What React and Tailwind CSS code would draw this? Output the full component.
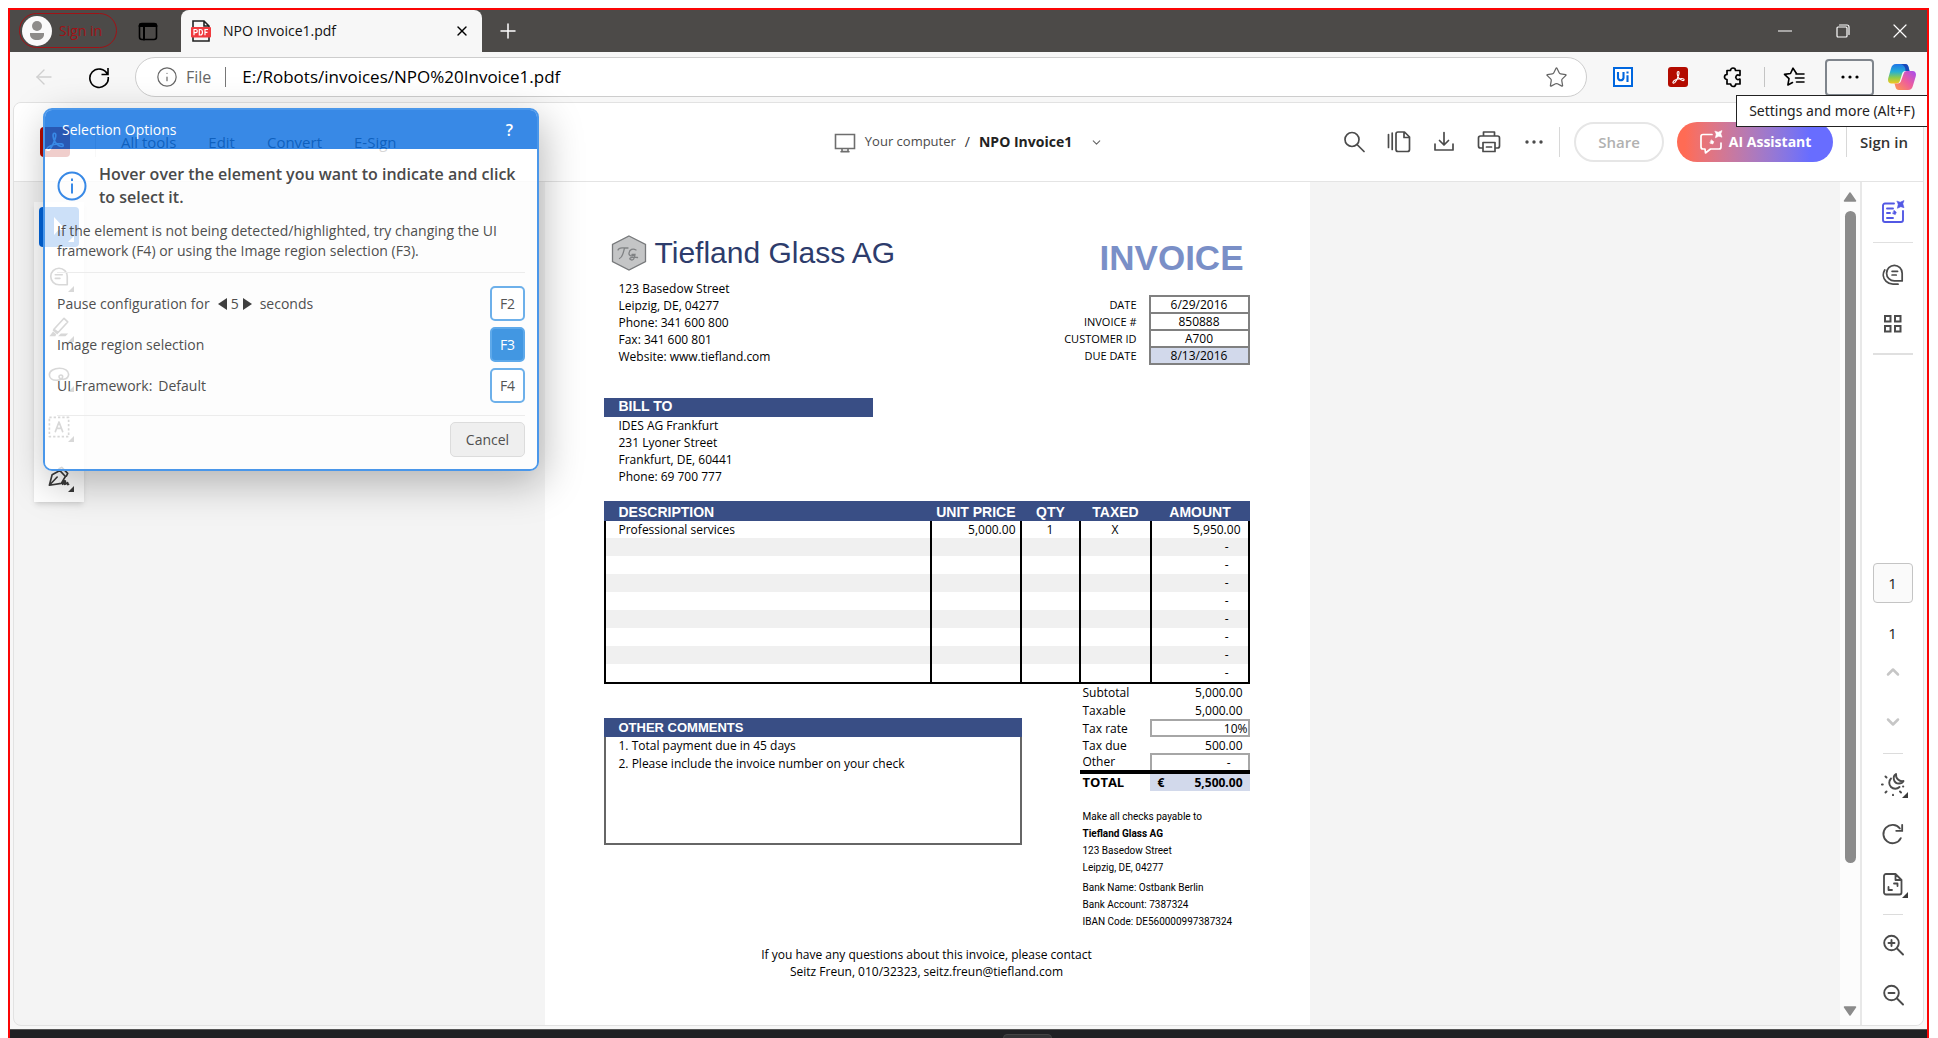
import React from "react";
import {
  ArrowLeft,
  X,
  Plus,
  Info,
  Star,
  ChevronDown,
  ChevronUp,
} from "lucide-react";

const UI_FONT = "font-['Open_Sans','Noto_Sans',sans-serif]";

function Svg({ size = 24, box = 24, sw = 1.6, className = "", children }) {
  return (
    <svg
      width={size}
      height={size}
      viewBox={`0 0 ${box} ${box}`}
      fill="none"
      stroke="currentColor"
      strokeWidth={sw}
      strokeLinecap="round"
      strokeLinejoin="round"
      className={"shrink-0 " + className}
      aria-hidden="true"
    >
      {children}
    </svg>
  );
}

function IconButton({ label, className = "", children }) {
  return (
    <button type="button" aria-label={label} className={"flex shrink-0 items-center justify-center " + className}>
      {children}
    </button>
  );
}

const AcrobatGlyph = ({ size }) => (
  <Svg size={size} sw={1.8}>
    <path d="M11.300 2.500c1.800-.3 1.900 2.500 1 5.500-1.200 4-3.800 9.500-6 12-1.400 1.600-3.800 1.200-3.200-.6.900-2.400 6.700-4.900 11.400-5.400 3.500-.4 6.500.1 6.500 1.700s-2.700 1.600-5 .1c-3.200-2-5.800-6.700-6.100-10.300-.1-1.700.3-2.800 1.400-3z" />
  </Svg>
);

/* ---------- Browser chrome ---------- */

function TabStrip() {
  return (
    <div className="flex h-[42px] shrink-0 items-stretch bg-[#4c4a48]">
      <button
        type="button"
        className="mt-[3px] ml-[9px] flex h-[35px] w-[98px] items-center rounded-full border border-[#a01216] text-sm text-[#a01216]"
      >
        <svg width="32" height="32" viewBox="0 0 32 32" className="ml-px shrink-0" aria-hidden="true">
          <circle cx="16" cy="16" r="15" fill="#fafafa" />
          <circle cx="16" cy="11" r="5" fill="#8e8c8a" />
          <path d="M9 18h14v1.500c0 3.500-3 5.500-7 5.500s-7-2-7-5.500z" fill="#8e8c8a" />
        </svg>
        <span className="ml-1.5">Sign in</span>
      </button>
      <IconButton label="Tab actions" className="ml-[20px] w-[22px] text-black">
        <Svg size={20} box={20} sw={1.6}>
          <rect x="1.500" y="2.500" width="17" height="16" rx="2.500" />
          <path d="M1.500 5h17M2 3.500h16M6 5.500v13" strokeWidth="2" />
        </Svg>
      </IconButton>
      <div className="ml-[22px] flex w-[301px] items-center rounded-t-lg bg-[#f7f7f7] pr-3 pl-[10px]">
        <svg width="20" height="22" viewBox="0 0 20 22" className="shrink-0" aria-hidden="true">
          <path d="M2 8V1h11l5 5v2M2 17v4h16v-4M13 1v5h5" fill="none" stroke="#222" strokeWidth="1.600" />
          <rect x="0" y="7" width="20" height="10.500" rx="1" fill="#f03a3e" />
          <path
            d="M3 15.300V9.500h1.700a1.500 1.500 0 0 1 0 3.200H3M8.300 9.500v5.500h1c2.900 0 2.900-5.500 0-5.500zM14 15.300V9.500h3M14 12.300h2.500"
            fill="none"
            stroke="#fff"
            strokeWidth="1.200"
          />
        </svg>
        <span className="ml-3 flex-1 text-sm text-[#111]">NPO Invoice1.pdf</span>
        <IconButton label="Close tab" className="size-4 text-black">
          <X size={16} strokeWidth={2} />
        </IconButton>
      </div>
      <IconButton label="New tab" className="ml-3 w-7 text-white">
        <Plus size={24} strokeWidth={1.5} />
      </IconButton>
      <div className="flex-1" />
      <IconButton label="Minimize" className="w-[58px] text-white">
        <Svg size={14} box={14} sw={1.2}>
          <path d="M.5 7h13" />
        </Svg>
      </IconButton>
      <IconButton label="Restore" className="w-[58px] text-white">
        <Svg size={14} box={14} sw={1.2}>
          <rect x="1" y="3" width="10" height="10" rx="1" />
          <path d="M3.500 1H11a2 2 0 0 1 2 2v7.500" />
        </Svg>
      </IconButton>
      <IconButton label="Close window" className="w-[55px] text-white">
        <Svg size={14} box={14} sw={1.2}>
          <path d="M1 1l12 12M13 1L1 13" />
        </Svg>
      </IconButton>
    </div>
  );
}

const PUZZLE =
  "M8.500 5.500a2.500 2.500 0 0 1 5 0H18V10a.5.5 0 0 1-.8.4 2.200 2.200 0 1 0 0 3.700.5.500 0 0 1 .8.400V19h-4.300a2.500 2.500 0 0 1-5 0H5v-4.500a2.500 2.500 0 0 1 0-5v-4z";

function AddressRow() {
  return (
    <div className="flex h-[50px] shrink-0 items-center bg-[#f7f7f7]">
      <IconButton label="Back" className="ml-[22px] text-[#cfcfcf]">
        <ArrowLeft size={24} strokeWidth={1.4} />
      </IconButton>
      <IconButton label="Refresh" className="ml-[31px] text-black">
        <Svg size={24} sw={1.6}>
          <path d="M20.500 9.500A9.200 9.200 0 1 0 21.200 12M21 3v6.500h-6.500" strokeLinecap="butt" strokeLinejoin="miter" />
        </Svg>
      </IconButton>
      <div className="ml-[24px] flex h-10 flex-1 items-center rounded-full border border-[#cdcdcd] bg-white pr-[18px] pl-[20px]">
        <Info size={22} strokeWidth={1.3} className="shrink-0 text-[#666]" />
        <span className="ml-2 text-base text-[#666]">File</span>
        <span className="mx-[14px] h-5 w-px bg-[#777]" />
        <input
          type="text"
          aria-label="Address"
          defaultValue="E:/Robots/invoices/NPO%20Invoice1.pdf"
          className="min-w-0 flex-1 bg-transparent pl-0.5 text-[17px] text-black outline-none"
        />
        <IconButton label="Add to favorites" className="text-[#666]">
          <Star size={23} strokeWidth={1.3} />
        </IconButton>
      </div>
      <IconButton label="UiPath" className="ml-[26px]">
        <svg width="20" height="20" viewBox="0 0 20 20" aria-hidden="true">
          <rect x="1" y="1" width="18" height="18" fill="#fff" stroke="#0067df" strokeWidth="2" />
          <path d="M5 5v6a2.800 2.800 0 0 0 5.500 0V5M14.500 8.300V15M14.500 4.500v2" fill="none" stroke="#0067df" strokeWidth="2.100" />
        </svg>
      </IconButton>
      <IconButton label="Adobe Acrobat" className="ml-[35px] size-5 rounded-[3px] bg-[#b30b00] text-white">
        <AcrobatGlyph size={15} />
      </IconButton>
      <IconButton label="Extensions" className="ml-[34px] text-black">
        <Svg size={24} sw={1.7}>
          <path d={PUZZLE} />
        </Svg>
      </IconButton>
      <span className="ml-[18px] h-5 w-px bg-[#c4c4c4]" />
      <IconButton label="Favorites" className="ml-[17px] text-black">
        <Svg size={24} sw={1.6}>
          <path d="M14.500 8.500L11 3.200 8.500 8.500l-6 .9 4.500 4.300-1.100 6.300 4.600-2.500M14 9h8M13.500 13h8.500M14.500 17h7.500" />
        </Svg>
      </IconButton>
      <IconButton
        label="Settings and more"
        className="ml-[19px] h-[37px] w-[49px] rounded border-2 border-[#7f858c] text-black"
      >
        <svg width="18" height="4" viewBox="0 0 18 4" aria-hidden="true">
          <circle cx="2" cy="2" r="1.600" />
          <circle cx="9" cy="2" r="1.600" />
          <circle cx="16" cy="2" r="1.600" />
        </svg>
      </IconButton>
      <IconButton label="Copilot" className="mr-[11px] ml-[14px]">
        <svg width="28" height="26" viewBox="0 0 28 26" aria-hidden="true">
          <defs>
            <linearGradient id="cpA" x1="0" y1="0" x2="0" y2="1">
              <stop offset="0" stopColor="#1f74e8" />
              <stop offset=".4" stopColor="#25b0d4" />
              <stop offset=".7" stopColor="#8ecb4c" />
              <stop offset="1" stopColor="#f4c71f" />
            </linearGradient>
            <linearGradient id="cpB" x1="1" y1="0" x2="0" y2="1">
              <stop offset="0" stopColor="#a44cf0" />
              <stop offset=".5" stopColor="#ee5d9c" />
              <stop offset="1" stopColor="#ff9a4a" />
            </linearGradient>
          </defs>
          <path d="M8 0h9c2 0 3 1 3.500 3l1 4h-4c-2 0-3 1-3.500 3l-2 6.500c-.6 2-1.500 3-3.500 3H3.500C.5 19.500-.5 17 .3 14L3 4.500C3.800 1.500 5.200 0 8 0z" fill="url(#cpA)" />
          <path d="M20 26h-9c-2 0-3-1-3.500-3l-1-3.500h3.200c2 0 3-1 3.500-3L15.500 10c.6-2 1.500-3 3.500-3h5.500c3 0 4 2.500 3.200 5.500L25 21.500c-.8 3-2.200 4.500-5 4.500z" fill="url(#cpB)" />
          <path d="M13 0h4c2 0 3 1 3.500 3l1 4h-4c0-4-1.500-6-4.500-7z" fill="#1a49b8" />
        </svg>
      </IconButton>
    </div>
  );
}

/* ---------- Viewer header ---------- */

function ViewerHeader() {
  return (
    <header className="grid h-[79px] shrink-0 grid-cols-[1fr_auto_1fr] items-center border-b border-[#e4e4e4] bg-white text-[15px] text-[#333]">
      <div className="flex items-center pl-[26px]">
        <span className="flex size-[30px] items-center justify-center rounded bg-[#b30b00] text-white">
          <AcrobatGlyph size={22} />
        </span>
        <span className="mr-[25px] ml-[25px] h-[30px] w-px bg-[#ddd]" />
        <nav className="flex gap-8">
          <button type="button">All tools</button>
          <button type="button">Edit</button>
          <button type="button">Convert</button>
          <button type="button">E-Sign</button>
        </nav>
      </div>
      <div className="flex items-center">
        <Svg size={22} box={22} sw={1.6} className="text-[#6e6e6e]">
          <path d="M1.500 3.500h19v14h-19zM8 17.500v3h6v-3M7 20.800h8" strokeLinejoin="miter" />
        </Svg>
        <span className="ml-[9px] text-[13px] text-[#4b4b4b]">Your computer</span>
        <span className="mx-[9px] text-sm">/</span>
        <button type="button" className="flex items-center text-sm font-bold text-[#222]">
          NPO Invoice1
          <ChevronDown size={13} strokeWidth={2} className="ml-[18px] text-[#666]" />
        </button>
      </div>
      <div className="flex items-center justify-end pr-[15px]">
        <IconButton label="Search" className="h-8 w-[45px] text-[#4b4b4b]">
          <Svg size={22} box={22} sw={1.7}>
            <circle cx="9" cy="8.500" r="7" />
            <path d="M14 13.500l7 7" />
          </Svg>
        </IconButton>
        <IconButton label="Page thumbnails" className="h-8 w-[45px] text-[#4b4b4b]">
          <Svg size={24} sw={1.7}>
            <path d="M1.500 4.500v13M5.200 3v16.500M11 2h6.500l5 5v12.500a2 2 0 0 1-2 2H11a2 2 0 0 1-2-2V4a2 2 0 0 1 2-2zM17 2.300V7.500h5" />
          </Svg>
        </IconButton>
        <IconButton label="Download" className="h-8 w-[45px] text-[#4b4b4b]">
          <Svg size={22} box={22} sw={1.7}>
            <path d="M11 1.500v12M6.500 9.500L11 14l4.500-4.500M2 13v6h18v-6" />
          </Svg>
        </IconButton>
        <IconButton label="Print" className="h-8 w-[45px] text-[#4b4b4b]">
          <Svg size={24} sw={1.7}>
            <path d="M6.500 6V2h11v4M5.500 18H3.500a2 2 0 0 1-2-2V8a2 2 0 0 1 2-2h17a2 2 0 0 1 2 2v8a2 2 0 0 1-2 2h-2M6 12.500h12v9H6zM9.500 17h5" />
          </Svg>
        </IconButton>
        <IconButton label="More" className="h-8 w-[45px] text-[#4b4b4b]">
          <svg width="20" height="4" viewBox="0 0 20 4" fill="currentColor" aria-hidden="true">
            <circle cx="3" cy="2" r="1.700" />
            <circle cx="10" cy="2" r="1.700" />
            <circle cx="17" cy="2" r="1.700" />
          </svg>
        </IconButton>
        <span className="mr-[14px] ml-[3px] h-[30px] w-px bg-[#d8d8d8]" />
        <button type="button" className="h-10 w-[90px] rounded-full border-2 border-[#e6e6e6] font-semibold text-[#b1b1b1]">
          Share
        </button>
        <button
          type="button"
          className="ml-[13px] flex h-10 w-[156px] items-center justify-center gap-1.5 rounded-full bg-linear-to-r from-[#ff6b54] from-5% to-[#686dff] to-85% text-sm font-bold text-white"
        >
          <Svg size={24} sw={1.7}>
            <path d="M13 4.500H4a2 2 0 0 0-2 2V17a2 2 0 0 0 2 2h2l.5 4L11.500 19H20a2 2 0 0 0 2-2v-4" />
            <path d="M16.200 1.200l3 1L23 .6l-1.200 3.200 1.200 3.400-3.200-1-3.400 1.600.8-3.400zM12.500 10l2.300 1.700-1 2.300-2.600-.8z" fill="currentColor" strokeWidth=".6" />
          </Svg>
          AI Assistant
        </button>
        <span className="mx-[13px] h-[30px] w-px bg-[#d8d8d8]" />
        <button type="button" className="font-semibold whitespace-nowrap text-[#333]">
          Sign in
        </button>
      </div>
    </header>
  );
}

/* ---------- Left floating tools ---------- */

const Corner = ({ className }) => (
  <svg width="6" height="6" viewBox="0 0 6 6" className={"absolute right-[5px] bottom-[5px] " + className} aria-hidden="true">
    <path d="M6 0v6H0z" fill="currentColor" />
  </svg>
);

function FloatingTools() {
  const tools = [
    [
      "Comment",
      <path key="a" d="M12 2.500a9 9 0 1 0 0 18h9v-9a9 9 0 0 0-9-9zM8 9.500h7.500M8 13.500h5" />,
    ],
    [
      "Highlight",
      <g key="b">
        <path d="M17.500 2.500l4 4L11 18l-4.500-3.500zM6 15.500l4 3.500" />
        <path d="M5.500 17l-4 5h6.500l1-2zM14 19h8l-3 3h-8z" fill="currentColor" stroke="none" />
      </g>,
    ],
    [
      "Draw",
      <path key="c" d="M17 14.500c3-.5 5.500-2.500 5.500-5.500 0-4-4.500-6.500-10-6.500S1.500 5 1.500 9.500c0 4 3.500 6 7.500 6 5 0 7-1.500 7-4s-4-2-4 0 2.500 3 5 3z" />,
    ],
    [
      "Edit text",
      <g key="d">
        <path d="M1.500 1.500h21v21h-21z" strokeDasharray="2.500 2.200" strokeLinecap="butt" />
        <path d="M8 17l4-10.500L16 17M9.500 13.500h5" />
      </g>,
    ],
    [
      "Sign",
      <path key="e" d="M1.500 21l3-11.500L13 5l6 6.500-4.500 7.500L1.500 21l8.500-9M12 3l3-1.500L21.500 8 20 11M16 20c1-3 2.500-4.500 3-3.500s-2 4-.5 3.500 2.500-2.500 3-1.500-1 2.500 1 1.500" />,
    ],
  ];
  return (
    <div className="absolute top-[20px] left-[20px] flex w-[50px] flex-col items-center gap-[10px] bg-white pt-[5px] pb-[5px] shadow-md">
      <button type="button" aria-label="Select" className="relative flex size-10 items-center justify-center rounded bg-[#0265dc] text-white">
        <svg width="20" height="22" viewBox="0 0 20 22" aria-hidden="true">
          <path d="M5 1v18l4.500-5H17z" fill="currentColor" />
        </svg>
        <Corner className="text-white" />
      </button>
      {tools.map(([label, icon]) => (
        <button key={label} type="button" aria-label={label} className="relative flex h-10 w-10 items-center justify-center text-[#3a3a3a]">
          <Svg size={22} sw={1.8}>{icon}</Svg>
          <Corner className="text-[#3a3a3a]" />
        </button>
      ))}
    </div>
  );
}

/* ---------- Invoice ---------- */

const META = [
  ["DATE", "6/29/2016"],
  ["INVOICE #", "850888"],
  ["CUSTOMER ID", "A700"],
  ["DUE DATE", "8/13/2016"],
];

const BLANK_ROWS = [1, 2, 3, 4, 5, 6, 7, 8];

function Invoice() {
  return (
    <article className="w-[765px] shrink-0 bg-white pt-[53px] pr-[60px] pl-[59px] text-xs font-medium text-black">
      <div className="flex justify-between">
        <div>
          <div className="flex h-9 items-center">
            <svg width="36" height="36" viewBox="0 0 36 36" className="ml-[7px]" aria-hidden="true">
              <path d="M18 1l16.500 8.500v17L18 35 1.500 26.500v-17z" fill="#c4c5c6" stroke="#77797b" strokeWidth="1.300" />
              <g fill="none" stroke="#808284" strokeWidth="1.300" strokeLinecap="round">
                <path d="M7 15c1-3 4-2 6.500-2h3.500M13.500 13c-1 4-1.500 9-5 10.500" />
                <path d="M25 15c-3-2-6.500-.5-7 3-.5 3 3.500 4 5.500 1.500h-2.500M24 19.500c-.3 4-2 6.500-4.500 5s2-3 7-2" />
              </g>
            </svg>
            <h1 className="ml-2 font-['Liberation_Sans',sans-serif] text-[30px] leading-9 font-normal text-[#2d3c6c]">
              Tiefland Glass AG
            </h1>
          </div>
          <address className="mt-[9px] ml-[15px] leading-[17px] not-italic">
            123 Basedow Street
            <br />
            Leipzig, DE, 04277
            <br />
            Phone: 341 600 800
            <br />
            Fax: 341 600 801
            <br />
            Website: www.tiefland.com
          </address>
        </div>
        <div className="flex flex-col items-end">
          <div className="mt-[3px] mr-1.5 font-['Liberation_Sans',sans-serif] text-[35px] leading-10 font-bold text-[#7a8fc7]">
            INVOICE
          </div>
          <table className="mt-[17px] border-collapse leading-[15px]">
            <tbody>
              {META.map(([k, v]) => (
                <tr key={k} className="h-[17px]">
                  <th className="p-0 pr-3 text-right text-[11px] font-medium">{k}</th>
                  <td
                    className={
                      "w-[99px] border-2 border-[#808080] p-0 text-center " + (k === "DUE DATE" ? "bg-[#d2d9eb]" : "")
                    }
                  >
                    {v}
                  </td>
                </tr>
              ))}
            </tbody>
          </table>
        </div>
      </div>

      <section className="mt-[33px]">
        <h2 className="h-[19px] w-[269px] bg-[#394e85] pl-[15px] font-['Liberation_Sans',sans-serif] text-[14px] leading-[17px] font-bold text-white">
          BILL TO
        </h2>
        <p className="ml-[15px] leading-[17px]">
          IDES AG Frankfurt
          <br />
          231 Lyoner Street
          <br />
          Frankfurt, DE, 60441
          <br />
          Phone: 69 700 777
        </p>
      </section>

      <table className="mt-[16px] w-full table-fixed border-separate border-spacing-0 border-b-2 border-black leading-4">
        <colgroup>
          <col />
          <col className="w-[90px]" />
          <col className="w-[59px]" />
          <col className="w-[71px]" />
          <col className="w-[100px]" />
        </colgroup>
        <thead>
          <tr className="h-[20px] bg-[#394e85] font-['Liberation_Sans',sans-serif] text-[14px] text-white">
            <th className="p-0 pt-0.5 pl-[15px] text-left">DESCRIPTION</th>
            <th className="p-0 pt-0.5 pr-1 text-right whitespace-nowrap">UNIT PRICE</th>
            <th className="p-0 pt-0.5 pl-[3px]">QTY</th>
            <th className="p-0 pt-0.5 pl-[3px]">TAXED</th>
            <th className="p-0 pt-0.5 pl-px">AMOUNT</th>
          </tr>
        </thead>
        <tbody>
          <tr className="h-[17px]">
            <td className="border-l-2 p-0 pl-[13px]">Professional services</td>
            <td className="border-l-2 p-0 pr-1 text-right">5,000.00</td>
            <td className="border-l-2 p-0 text-center">1</td>
            <td className="border-l-2 p-0 text-center">X</td>
            <td className="border-x-2 p-0 pr-[7px] text-right">5,950.00</td>
          </tr>
          {BLANK_ROWS.map((n) => (
            <tr key={n} className="h-[18px] odd:bg-white even:bg-[#f0f0f0]">
              <td className="border-l-2 p-0" />
              <td className="border-l-2 p-0" />
              <td className="border-l-2 p-0" />
              <td className="border-l-2 p-0" />
              <td className="border-x-2 p-0 pr-[19px] text-right">-</td>
            </tr>
          ))}
        </tbody>
      </table>

      <div className="flex justify-between">
        <section className="mt-[34px] h-[127px] w-[418px] border-2 border-t-0 border-[#666]">
          <h2 className="-mx-0.5 h-[19px] bg-[#394e85] pl-[15px] font-['Liberation_Sans',sans-serif] text-[13px] leading-[19px] font-bold text-white">
            OTHER COMMENTS
          </h2>
          <ol className="pl-[13px] leading-[18px]">
            <li>1. Total payment due in 45 days</li>
            <li>2. Please include the invoice number on your check</li>
          </ol>
        </section>
        <div className="w-[170px]">
          <table className="w-full table-fixed border-separate border-spacing-0 leading-[13px]">
            <colgroup>
              <col />
              <col className="w-[100px]" />
            </colgroup>
            <tbody>
              <tr className="h-[17px]">
                <th className="p-0 pl-[3px] text-left font-medium">Subtotal</th>
                <td className="p-0 pr-[7px] text-right">5,000.00</td>
              </tr>
              <tr className="h-[18px]">
                <th className="p-0 pl-[3px] text-left font-medium">Taxable</th>
                <td className="p-0 pr-[7px] text-right">5,000.00</td>
              </tr>
              <tr className="h-[18px]">
                <th className="p-0 pl-[3px] text-left font-medium">Tax rate</th>
                <td className="border-2 border-[#a6a6a6] p-0 text-right">10%</td>
              </tr>
              <tr className="h-[16px]">
                <th className="p-0 pl-[3px] text-left font-medium">Tax due</th>
                <td className="p-0 pr-[7px] text-right">500.00</td>
              </tr>
              <tr className="h-[17px]">
                <th className="p-0 pl-[3px] text-left font-medium">Other</th>
                <td className="border-2 border-b-0 border-[#a6a6a6] p-0 pr-[17px] text-right">-</td>
              </tr>
              <tr className="h-[21px] font-bold">
                <th className="border-t-4 p-0 pl-[3px] text-left text-[13px]">TOTAL</th>
                <td className="border-t-4 bg-[#d2d9eb] bg-clip-padding p-0">
                  <div className="flex justify-between pr-[7px] pl-2">
                    <span>€</span>
                    <span>5,500.00</span>
                  </div>
                </td>
              </tr>
            </tbody>
          </table>
          <div className="mt-[17px] ml-[3px] font-['Roboto',sans-serif] text-[10px] leading-[17px] font-normal whitespace-nowrap">
            <p>Make all checks payable to</p>
            <p className="font-bold">Tiefland Glass AG</p>
            <p>123 Basedow Street</p>
            <p>Leipzig, DE, 04277</p>
            <p className="mt-[3px]">Bank Name: Ostbank Berlin</p>
            <p>Bank Account: 7387324</p>
            <p>IBAN Code: DE560000997387324</p>
          </div>
        </div>
      </div>

      <footer className="mt-4 text-center leading-[17px]">
        <p>If you have any questions about this invoice, please contact</p>
        <p>Seitz Freun, 010/32323, seitz.freun@tiefland.com</p>
      </footer>
    </article>
  );
}

/* ---------- Right side ---------- */

function ScrollTrack() {
  return (
    <div className="flex w-5 shrink-0 flex-col items-center bg-[#fcfcfc] pt-[10px] pb-[9px]">
      <svg width="14" height="10" viewBox="0 0 14 10" aria-hidden="true">
        <path d="M7 1l5.500 8h-11z" fill="#8b8b8b" stroke="#8b8b8b" strokeLinejoin="round" strokeWidth="1.500" />
      </svg>
      <div className="mt-[9px] flex min-h-0 w-[11px] flex-1 flex-col">
        <div className="h-[82%] rounded-full bg-[#8b8b8b]" />
      </div>
      <svg width="14" height="10" viewBox="0 0 14 10" aria-hidden="true">
        <path d="M7 9l5.500-8h-11z" fill="#8b8b8b" stroke="#8b8b8b" strokeLinejoin="round" strokeWidth="1.500" />
      </svg>
    </div>
  );
}

const RailCorner = () => (
  <svg width="6" height="6" viewBox="0 0 6 6" className="absolute right-[5px] bottom-[6px] text-[#3a3a3a]" aria-hidden="true">
    <path d="M6 0v6H0z" fill="currentColor" />
  </svg>
);

function RightRail() {
  const btn = "relative size-10 text-[#4b4b4b]";
  return (
    <aside className="flex w-[63px] shrink-0 flex-col items-center border-l-2 border-[#e8e8e8] bg-white">
      <IconButton label="AI summary" className="mt-[10px] size-10 text-[#5258e4]">
        <Svg size={24} sw={1.9}>
          <path d="M13 3.500H4a2 2 0 0 0-2 2V20a2 2 0 0 0 2 2h16a2 2 0 0 0 2-2v-9M6 8.500h6M6 13h3M6 18h6" />
          <path d="M16.200 1.200l3 1L23 .6l-1.200 3.200 1.200 3.900-3.200-1-3.400 1.600.8-3.800zM13.200 10.500l2.100 1.700-1 2.300-2.400-.8z" fill="currentColor" strokeWidth=".6" />
        </Svg>
      </IconButton>
      <hr className="mt-[10px] w-10 border-[#e0e0e0]" />
      <IconButton label="Comments" className={btn + " mt-[12px]"}>
        <Svg size={22} sw={1.9}>
          <path d="M13.500 1.500a8.500 8.500 0 1 0 0 17H22V10a8.500 8.500 0 0 0-8.500-8.500zM11 8h6M11 12h4.500M3 6.500c-2.500 4-2 9 1.500 12.500 2 2 4.500 3 7.500 3h5.500" />
        </Svg>
      </IconButton>
      <IconButton label="All pages" className={btn + " mt-[9px]"}>
        <Svg size={22} box={22} sw={2}>
          <path d="M3 3h5.500v5.500H3zM13 3h5.500v5.500H13zM3 13h5.500v5.500H3zM13 13h5.500v5.500H13z" strokeLinejoin="miter" />
        </Svg>
      </IconButton>
      <hr className="mt-[9px] w-10 border-t-2 border-[#e0e0e0]" />
      <div className="flex-1" />
      <input
        type="text"
        aria-label="Page number"
        defaultValue="1"
        className="size-10 rounded border border-[#c4c4c4] bg-[#fafafa] text-center text-[15px] text-[#222]"
      />
      <span className="mt-[20px] text-[15px] leading-5 text-[#222]">1</span>
      <IconButton label="Previous page" className="mt-[9px] size-10 text-[#c6c6c6]">
        <ChevronUp size={20} strokeWidth={3} />
      </IconButton>
      <IconButton label="Next page" className="mt-[10px] size-10 text-[#c6c6c6]">
        <ChevronDown size={20} strokeWidth={3} />
      </IconButton>
      <hr className="mt-[11px] w-5 border-[#dcdcdc]" />
      <IconButton label="Theme" className={btn + " mt-[10px]"}>
        <Svg size={24} sw={1.9}>
          <path d="M10 6.500a6 6 0 1 0 8.500 8.500" />
          <path d="M15 2c-4 2.500-2.500 9.500 3 9.500 2 0 3.500-.5 4.500-2.500-4 1-8-2.500-7.500-7z" />
          <path d="M.8 12.500h1M4.500 4.500l1 1M4.500 20.500l1-1M12 23.500v-.8M20 20.500l-1-1M22 14.500h.3" />
        </Svg>
        <RailCorner />
      </IconButton>
      <IconButton label="Rotate" className={btn + " mt-[10px]"}>
        <Svg size={22} sw={2}>
          <path d="M20.500 16.500A10 10 0 1 1 19.500 6M22 2v6.500h-6.500" strokeLinejoin="miter" />
        </Svg>
      </IconButton>
      <IconButton label="Fit page" className={btn + " mt-[10px]"}>
        <Svg size={24} sw={1.8}>
          <path d="M5 2h9.500l6 6v12.500a2 2 0 0 1-2 2H5a2 2 0 0 1-2-2V4a2 2 0 0 1 2-2zM14.500 2v6h5.500M13 11.500h3.500V14M7.500 15v3h3.500" />
        </Svg>
        <RailCorner />
      </IconButton>
      <hr className="mt-[10px] w-5 border-[#dcdcdc]" />
      {["Zoom in", "Zoom out"].map((label) => (
        <IconButton key={label} label={label} className={btn + " mt-[10px]"}>
          <Svg size={22} box={22} sw={1.9}>
            <circle cx="9.500" cy="9" r="7.300" />
            <path d="M15 14.500l6 6M6.500 9h6" />
            {label === "Zoom in" && <path d="M9.500 6v6" />}
          </Svg>
        </IconButton>
      ))}
      <div className="h-[10px] shrink-0" />
    </aside>
  );
}

/* ---------- Selection dialog ---------- */

function Key({ children, filled }) {
  return (
    <kbd
      className={
        "flex h-[35px] w-[35px] items-center justify-center rounded-[5px] border-2 font-['Open_Sans',sans-serif] text-sm " +
        (filled ? "border-[#5ea9ea] bg-[#4297e2] text-white" : "border-[#6db0ea] bg-white text-[#555]")
      }
    >
      {children}
    </kbd>
  );
}

function SelectionDialog() {
  return (
    <section
      role="dialog"
      aria-labelledby="sel-title"
      className="absolute top-[108px] left-[43px] w-[496px] overflow-hidden rounded-[9px] border-2 border-[#4a97ea] text-sm text-[#4f4f4f] shadow-[4px_12px_40px_rgba(0,0,0,0.28)]"
    >
      <div className="flex h-[39px] items-center bg-[#066be0]/80 pr-6 pl-[17px] text-white">
        <h2 id="sel-title" className="flex-1">
          Selection Options
        </h2>
        <button type="button" aria-label="Help" className="text-base font-semibold">
          ?
        </button>
      </div>
      <div className="bg-white/80 px-3 pb-[12px]">
        <div className="flex items-center pt-[14px]">
          <svg width="30" height="30" viewBox="0 0 30 30" className="shrink-0" aria-hidden="true">
            <circle cx="15" cy="15" r="13.500" fill="none" stroke="#3889e6" strokeWidth="2" />
            <path d="M15 12.500v10M15 7.500v2.500" stroke="#3889e6" strokeWidth="2" />
          </svg>
          <p className="ml-3 text-base leading-[23px] font-semibold text-[#4a4a4a]">
            Hover over the element you want to indicate and click to select it.
          </p>
        </div>
        <p className="mt-[12px] leading-5">
          If the element is not being detected/highlighted, try changing the UI framework (F4) or using the Image region
          selection (F3).
        </p>
        <hr className="mt-[11px] border-[#ececec]" />
        <div className="mt-[13px] flex flex-col gap-1.5">
          <div className="flex items-center justify-between">
            <span className="flex items-center">
              Pause configuration for
              <button type="button" aria-label="Decrease" className="mr-1 ml-2">
                <svg width="9" height="12" viewBox="0 0 9 12" aria-hidden="true">
                  <path d="M9 0v12L0 6z" fill="#3f3f3f" />
                </svg>
              </button>
              5
              <button type="button" aria-label="Increase" className="mr-2 ml-1">
                <svg width="9" height="12" viewBox="0 0 9 12" aria-hidden="true">
                  <path d="M0 0v12l9-6z" fill="#3f3f3f" />
                </svg>
              </button>
              seconds
            </span>
            <Key>F2</Key>
          </div>
          <div className="flex items-center justify-between">
            <span>Image region selection</span>
            <Key filled>F3</Key>
          </div>
          <div className="flex items-center justify-between">
            <span className="flex gap-1.5">
              <span>UI Framework:</span>
              <span>Default</span>
            </span>
            <Key>F4</Key>
          </div>
        </div>
        <hr className="mt-[12px] border-[#ececec]" />
        <div className="mt-1.5 flex justify-end">
          <button type="button" className="h-[35px] w-[75px] rounded-[5px] border border-[#dcdcdc] bg-[#efefef]">
            Cancel
          </button>
        </div>
      </div>
    </section>
  );
}

export default function App() {
  return (
    <div className={"relative flex h-screen flex-col overflow-hidden bg-white pt-2 pr-[9px] pl-2 " + UI_FONT}>
      <div className="flex min-h-0 flex-1 flex-col border-2 border-b-0 border-[#fb0505]">
        <TabStrip />
        <AddressRow />
        <main className="flex min-h-0 flex-1 flex-col bg-[#f7f7f7] px-[3px] pb-[3px]">
          <div className="flex min-h-0 flex-1 flex-col overflow-hidden rounded-lg border border-[#e2e2e2] bg-[#f4f4f4]">
            <ViewerHeader />
            <div className="relative flex min-h-0 flex-1">
              <div className="flex min-w-0 flex-1 justify-center overflow-hidden">
                <Invoice />
              </div>
              <ScrollTrack />
              <RightRail />
              <FloatingTools />
            </div>
          </div>
        </main>
        <div className="flex h-[9px] shrink-0 justify-center overflow-hidden border-t border-[#555] bg-[#202124]">
          <div className="mt-1 ml-[118px] h-4 w-[49px] rounded border border-[#444] bg-[#333436]" />
        </div>
      </div>
      <SelectionDialog />
      <div
        role="tooltip"
        className="absolute top-[95px] right-[11px] flex h-8 items-center border border-r-0 border-[#222] bg-white px-3 font-['Noto_Sans',sans-serif] text-sm text-[#222]"
      >
        Settings and more (Alt+F)
      </div>
    </div>
  );
}
